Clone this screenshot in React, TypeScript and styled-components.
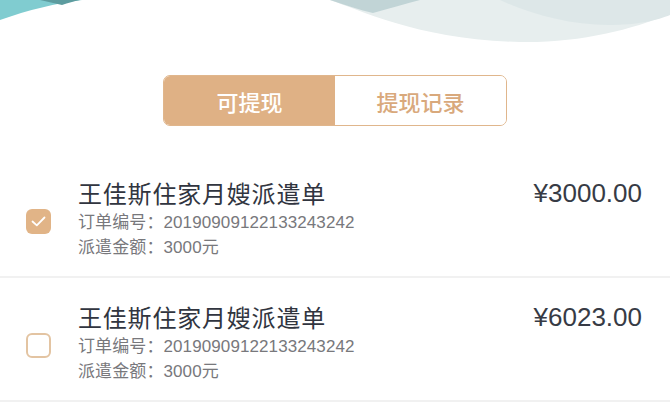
import React, { useState } from "react";
import styled, { createGlobalStyle } from "styled-components";

const GlobalStyle = createGlobalStyle`
  html, body { margin: 0; padding: 0; background: #ffffff; }
  body { font-family: "Liberation Sans", "Noto Sans CJK SC", sans-serif; }
  * { box-sizing: border-box; }
`;

const Page = styled.div`
  width: 670px;
  min-height: 415px;
  background: #ffffff;
  overflow: hidden;
  display: flex;
  flex-direction: column;
`;

const Header = styled.div`
  height: 50px;
  svg { display: block; }
`;

const TabBar = styled.div`
  margin: 25px auto 0;
  width: 344px;
  height: 51px;
  display: flex;
  border: 1.5px solid #e0b68c;
  border-radius: 7px;
  overflow: hidden;
`;

const Tab = styled.button<{ $active: boolean }>`
  flex: 1;
  border: none;
  margin: 0;
  padding: 0;
  cursor: pointer;
  font-family: "Noto Sans CJK SC", sans-serif;
  font-size: 22px;
  font-weight: 500;
  background: ${(p) => (p.$active ? "#dfb185" : "#ffffff")};
  color: ${(p) => (p.$active ? "#ffffff" : "#d9a97c")};
`;

const List = styled.div`
  margin-top: 28px;
  display: flex;
  flex-direction: column;
`;

const Item = styled.div`
  display: flex;
  align-items: center;
  padding: 24px 28px 16px 26px;
  border-bottom: 2px solid #f1f1f1;
`;

const Check = styled.div<{ $checked: boolean }>`
  width: 25px;
  height: 25px;
  border-radius: 6px;
  flex-shrink: 0;
  margin-top: 4px;
  display: flex;
  align-items: center;
  justify-content: center;
  background: ${(p) => (p.$checked ? "#e1b487" : "#ffffff")};
  border: ${(p) => (p.$checked ? "none" : "2px solid #e3c4a2")};
  cursor: pointer;
`;

const Info = styled.div`
  margin-left: 27px;
  flex: 1;
  display: flex;
  flex-direction: column;
`;

const Title = styled.div`
  font-family: "Noto Sans CJK SC", sans-serif;
  font-size: 24px;
  letter-spacing: 0.8px;
  line-height: 30px;
  color: #31353f;
`;

const Meta = styled.div<{ $first?: boolean }>`
  font-family: "Liberation Sans", "Noto Sans CJK SC", sans-serif;
  font-size: 17px;
  letter-spacing: 0.1px;
  line-height: 25px;
  margin-top: ${(p) => (p.$first ? "2px" : "0")};
  color: #78787c;
`;

const Price = styled.div`
  align-self: flex-start;
  font-family: "Liberation Sans", sans-serif;
  font-size: 26px;
  line-height: 30px;
  color: #373b45;
`;

const Wave = () => (
  <svg width="670" height="50" viewBox="0 0 670 50">
    <path d="M330 0 C360 10 420 40 520 42 C580 43 630 30 670 14 L670 0 Z" fill="#e7eeee" />
    <path d="M500 0 C530 14 570 25 608 25 C638 25 658 20 670 15 L670 0 Z" fill="#dde7e8" />
    <path d="M330 0 C345 5 360 10 373 13 C390 8 405 4 420 0 Z" fill="#c1d4d6" />
    <path d="M0 0 L82 0 C57 3 28 10 0 20 Z" fill="#80ccd0" />
    <path d="M40 0 L62 5 C68 3 74 1 80 0 Z" fill="#5d9c9f" />
  </svg>
);

type Order = { id: number; title: string; no: string; amount: string; price: string };

const orders: Order[] = [
  { id: 1, title: "王佳斯住家月嫂派遣单", no: "20190909122133243242", amount: "3000元", price: "¥3000.00" },
  { id: 2, title: "王佳斯住家月嫂派遣单", no: "20190909122133243242", amount: "3000元", price: "¥6023.00" },
];

const CheckMark = () => (
  <svg width="15" height="11" viewBox="0 0 15 11">
    <path d="M1.5 5.5 L5.8 9.3 L13.5 1.5" fill="none" stroke="#ffffff" strokeWidth="1.8" strokeLinecap="round" strokeLinejoin="round" />
  </svg>
);

export default function App() {
  const [tab, setTab] = useState(0);
  const [checked, setChecked] = useState<Record<number, boolean>>({ 1: true, 2: false });
  return (
    <Page>
      <GlobalStyle />
      <Header>
        <Wave />
      </Header>
      <TabBar>
        <Tab $active={tab === 0} onClick={() => setTab(0)}>可提现</Tab>
        <Tab $active={tab === 1} onClick={() => setTab(1)}>提现记录</Tab>
      </TabBar>
      <List>
        {orders.map((o) => (
          <Item key={o.id}>
            <Check $checked={!!checked[o.id]} onClick={() => setChecked({ ...checked, [o.id]: !checked[o.id] })}>
              {checked[o.id] && <CheckMark />}
            </Check>
            <Info>
              <Title>{o.title}</Title>
              <Meta $first>订单编号：{o.no}</Meta>
              <Meta>派遣金额：{o.amount}</Meta>
            </Info>
            <Price>{o.price}</Price>
          </Item>
        ))}
      </List>
    </Page>
  );
}
